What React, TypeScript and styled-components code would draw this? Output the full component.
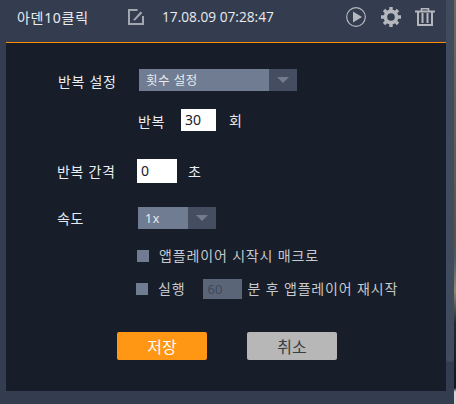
import React from "react";
import styled, { createGlobalStyle } from "styled-components";

const GlobalStyle = createGlobalStyle`
  html, body {
    margin: 0;
    padding: 0;
    background: #000;
    overflow: hidden;
  }
  #root {
    width: 456px;
    height: 404px;
  }
`;

const fontStack = `"Noto Sans", "Noto Sans CJK KR", sans-serif`;

function App() {
  return (
    <Page>
      <GlobalStyle />
      <Frame>
        <Main>
          <Header>
            <Title>아덴10클릭</Title>
            <EditIcon viewBox="0 0 16 16">
              <path d="M9.5 1H1v14h14V7" fill="none" stroke="#a3a8b0" strokeWidth="2" />
              <path d="M5 11 12.5 2.5l1.8 1.5L7 11.5z" fill="#a3a8b0" />
            </EditIcon>
            <DateText>17.08.09 07:28:47</DateText>
            <PlayIcon viewBox="0 0 20 20">
              <circle cx="10" cy="10" r="9.3" fill="none" stroke="#b4b7bc" strokeWidth="1.2" />
              <path d="M7 4.5v11l9-5.5z" fill="#b4b7bc" />
            </PlayIcon>
            <GearIcon viewBox="0 0 20 20">
              <circle cx="10" cy="10" r="5.6" fill="none" stroke="#b4b7bc" strokeWidth="3.6" />
              <g stroke="#b4b7bc" strokeWidth="3.4">
                <path d="M10 0v4M10 16v4M0 10h4M16 10h4M3 3l2.6 2.6M14.4 14.4 17 17M17 3l-2.6 2.6M5.6 14.4 3 17" />
              </g>
            </GearIcon>
            <TrashIcon viewBox="0 0 20 18">
              <path d="M0 3.5h20" stroke="#b4b7bc" strokeWidth="2" />
              <path d="M6.5 3V.8h7V3" fill="none" stroke="#b4b7bc" strokeWidth="1.6" />
              <path d="M3 4v13h14V4" fill="none" stroke="#b4b7bc" strokeWidth="2" />
              <path d="M7.5 5v10M12.5 5v10" stroke="#b4b7bc" strokeWidth="2" />
            </TrashIcon>
          </Header>
          <Body>
            <FormRow $top={26} $left={52}>
              <FieldLabel $width={81} $drop={2}>반복 설정</FieldLabel>
              <Select $width={158}>
                <SelectValue>횟수 설정</SelectValue>
                <SelectArrow />
              </Select>
            </FormRow>
            <FormRow $top={18} $left={132}>
              <FieldLabel $width={43} $drop={2}>반복</FieldLabel>
              <NumberInput $width={35} $height={22}>30</NumberInput>
              <Unit $gap={13}>회</Unit>
            </FormRow>
            <FormRow $top={28} $left={51}>
              <FieldLabel $width={80} $drop={1}>반복 간격</FieldLabel>
              <NumberInput $width={40} $height={24}>0</NumberInput>
              <Unit $gap={11}>초</Unit>
            </FormRow>
            <FormRow $top={24} $left={51}>
              <FieldLabel $width={81} $drop={1}>속도</FieldLabel>
              <Select $width={78}>
                <SelectValue>1x</SelectValue>
                <SelectArrow />
              </Select>
            </FormRow>
            <FormRow $top={17} $left={131}>
              <Checkbox />
              <OptionText>앱플레이어 시작시 매크로</OptionText>
            </FormRow>
            <FormRow $top={13} $left={130}>
              <Checkbox />
              <OptionText>실행</OptionText>
              <DisabledInput>60</DisabledInput>
              <OptionText $gap={5}>분 후 앱플레이어 재시작</OptionText>
            </FormRow>
            <ButtonRow>
              <SaveButton>저장</SaveButton>
              <CancelButton>취소</CancelButton>
            </ButtonRow>
          </Body>
        </Main>
        <Scrollbar>
          <ScrollThumb />
        </Scrollbar>
      </Frame>
      <Backdrop />
    </Page>
  );
}

export default App;

const Page = styled.div`
  display: flex;
  width: 456px;
  height: 404px;
  font-family: ${fontStack};
  font-size: 14px;
  letter-spacing: 0.7px;
  color: #e9ebef;
`;
const Frame = styled.div`
  display: flex;
  width: 454px;
  height: 404px;
  background: #343d50;
`;
const Backdrop = styled.div`
  width: 2px;
  height: 404px;
  background: linear-gradient(
    to bottom,
    #6e675e 0,
    #57534c 60%,
    #4a5a60 64%,
    #8b8a70 72%,
    #1d2a33 80%,
    #0e1720 96%,
    #d6d6d6 97%,
    #d6d6d6 100%
  );
`;
const Main = styled.div`
  display: flex;
  flex-direction: column;
  width: 440px;
  height: 391px;
  margin-left: 6px;
`;
const Header = styled.header`
  display: flex;
  align-items: center;
  flex-shrink: 0;
  box-sizing: border-box;
  height: 43px;
  padding-left: 11px;
  padding-bottom: 9px;
  border-bottom: 1px solid #ff8c0a;
`;
const Title = styled.span`
  width: 111px;
`;
const EditIcon = styled.svg`
  width: 16px;
  height: 16px;
`;
const DateText = styled.span`
  width: 184px;
  margin-left: 18px;
  font-size: 13.7px;
  letter-spacing: 0;
  font-family: "Open Sans", ${fontStack};
`;
const PlayIcon = styled.svg`
  width: 20px;
  height: 20px;
`;
const GearIcon = styled.svg`
  width: 20px;
  height: 20px;
  margin-left: 15px;
`;
const TrashIcon = styled.svg`
  width: 20px;
  height: 18px;
  margin-left: 14px;
`;
const Body = styled.section`
  flex: 1;
  display: flex;
  flex-direction: column;
  background: #171e29;
`;
const FormRow = styled.div<{ $top: number; $left: number }>`
  display: flex;
  align-items: center;
  margin-top: ${(props) => props.$top}px;
  margin-left: ${(props) => props.$left}px;
`;
const FieldLabel = styled.label<{ $width: number; $drop: number }>`
  box-sizing: border-box;
  width: ${(props) => props.$width}px;
  height: 22px;
  padding-top: ${(props) => props.$drop * 2}px;
  line-height: ${(props) => 22 - props.$drop * 2}px;
`;
const Select = styled.div<{ $width: number }>`
  display: flex;
  width: ${(props) => props.$width}px;
  height: 22px;
  background: #6f7c92;
`;
const SelectValue = styled.span`
  flex: 1;
  padding-left: 7px;
  font-size: 12.5px;
  letter-spacing: 0.5px;
  line-height: 23px;
`;
const SelectArrow = styled.span`
  position: relative;
  width: 28px;
  background: #454e60;
  &::after {
    content: "";
    position: absolute;
    left: 8px;
    top: 8px;
    border-left: 6px solid transparent;
    border-right: 6px solid transparent;
    border-top: 6px solid #6f7c92;
  }
`;
const NumberInput = styled.div<{ $width: number; $height: number }>`
  width: ${(props) => props.$width}px;
  height: ${(props) => props.$height}px;
  line-height: ${(props) => props.$height}px;
  box-sizing: border-box;
  padding-left: 4px;
  background: #fff;
  color: #17202c;
  letter-spacing: 0;
`;
const Unit = styled.span<{ $gap: number }>`
  margin-left: ${(props) => props.$gap}px;
`;
const Checkbox = styled.span`
  width: 12px;
  height: 12px;
  background: #6f7c92;
`;
const OptionText = styled.span<{ $gap?: number }>`
  margin-left: ${(props) => props.$gap ?? 10}px;
  color: #c6c9ce;
  letter-spacing: 0.85px;
  line-height: 20px;
`;
const DisabledInput = styled.div`
  width: 39px;
  height: 20px;
  margin-left: 18px;
  box-sizing: border-box;
  padding-left: 4px;
  line-height: 20px;
  background: #5b6578;
  color: #3f4858;
  font-size: 13px;
  letter-spacing: 0;
`;
const ButtonRow = styled.div`
  display: flex;
  gap: 40px;
  margin-top: 33px;
  margin-left: 111px;
`;
const SaveButton = styled.button`
  width: 90px;
  height: 28px;
  padding: 0;
  border: none;
  border-radius: 2px;
  background: #ff9614;
  color: #fff;
  font-family: ${fontStack};
  font-size: 16px;
`;
const CancelButton = styled(SaveButton)`
  background: #b7b7b7;
  color: #3a3d44;
`;
const Scrollbar = styled.div`
  width: 8px;
  height: 404px;
`;
const ScrollThumb = styled.div`
  height: 362px;
  background: #414b5e;
  border-radius: 0 0 4px 4px;
`;
